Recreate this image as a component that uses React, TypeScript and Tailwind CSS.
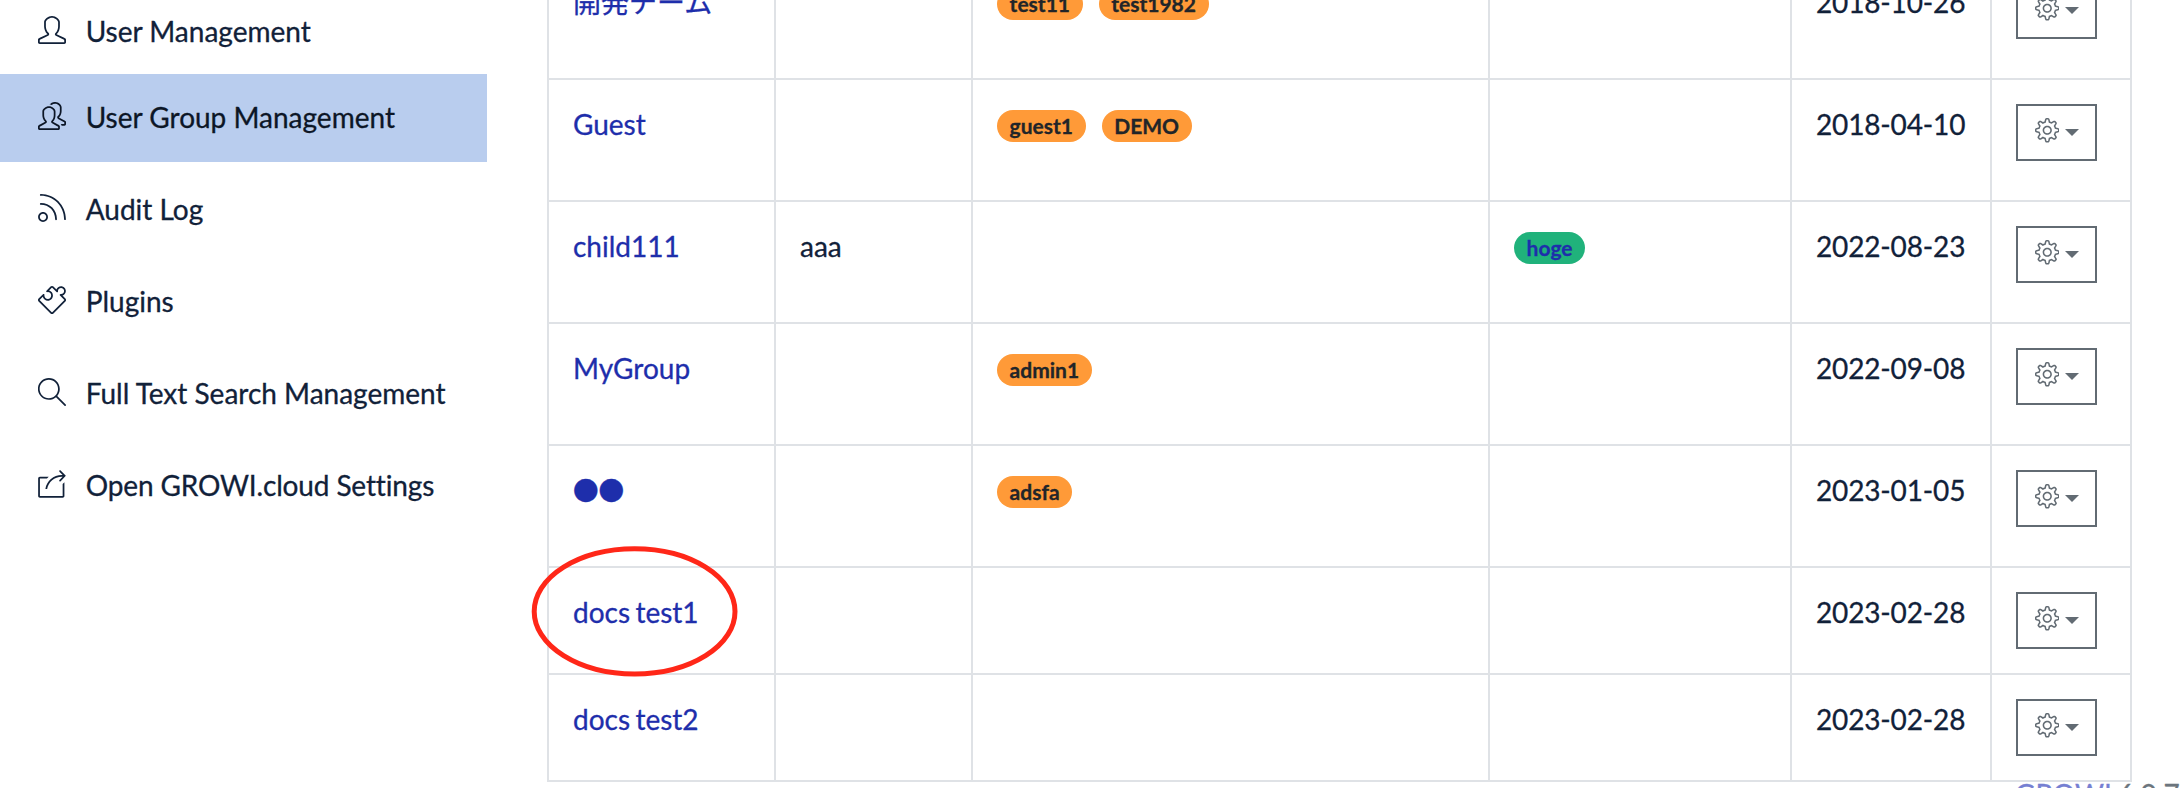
import type { IconType } from 'react-icons';
import { SlFeed, SlMagnifier, SlPeople, SlPuzzle, SlSettings, SlShareAlt, SlUser } from 'react-icons/sl';

type MenuItem = { label: string; icon: IconType; active?: boolean; tight?: boolean };

type Group = {
  name: string;
  description?: string;
  users?: string[];
  children?: string[];
  created: string;
  compact?: boolean;
  circled?: boolean;
};

const menu: MenuItem[] = [
  { label: 'User Management', icon: SlUser },
  { label: 'User Group Management', icon: SlPeople, active: true },
  { label: 'Audit Log', icon: SlFeed },
  { label: 'Plugins', icon: SlPuzzle },
  { label: 'Full Text Search Management', icon: SlMagnifier },
  { label: 'Open GROWI.cloud Settings', icon: SlShareAlt, tight: true },
];

const groups: Group[] = [
  { name: '開発チーム', users: ['test11', 'test1982'], created: '2018-10-26' },
  { name: 'Guest', users: ['guest1', 'DEMO'], created: '2018-04-10' },
  { name: 'child111', description: 'aaa', children: ['hoge'], created: '2022-08-23' },
  { name: 'MyGroup', users: ['admin1'], created: '2022-09-08' },
  { name: '●●', users: ['adsfa'], created: '2023-01-05' },
  { name: 'docs test1', created: '2023-02-28', compact: true, circled: true },
  { name: 'docs test2', created: '2023-02-28', compact: true },
];

function Sidebar() {
  return (
    <nav className="flex w-[487px] shrink-0 flex-col">
      {menu.map(({ label, icon: Icon, active, tight }, i) => (
        <a
          key={label}
          className={`flex h-[88px] shrink-0 items-center pl-[38px] ${
            active ? 'mb-1 bg-[#b9cdee] text-[#0c1626]' : 'text-[#112139]'
          } ${i === 0 ? '-mt-3 mb-[-2px]' : ''} ${i > 1 ? 'mb-1' : ''}`}
        >
          <Icon className="mt-[-4px] size-7" />
          <span className={`mb-[3px] ml-[19.7px] whitespace-nowrap ${tight ? 'tracking-[-0.14px]' : ''}`}>
            {label}
          </span>
        </a>
      ))}
    </nav>
  );
}

const cell = 'border-r-2 border-b-2 border-[#dfe2e6] px-6';
const textCell = `${cell} pt-[22.5px] whitespace-nowrap`;

function Badge({ label, className }: { label: string; className: string }) {
  return (
    <span
      className={`mt-1.5 h-8 rounded-full px-[12.6px] text-[21px] leading-8 font-bold ${className} ${
        label.endsWith('11') ? '[font-kerning:none]' : ''
      }`}
    >
      {label}
    </span>
  );
}

function Row({ group }: { group: Group }) {
  return (
    <div
      className={`grid grid-cols-[227px_197px_517px_302px_200px_140px] ${group.compact ? 'h-[107px]' : 'h-[122px]'}`}
    >
      <div className={`${textCell} relative text-[#1e2eab] [word-spacing:-1.8px]`}>
        {group.name === '●●' ? (
          <span className="align-[1.5px] font-['Noto_Sans_CJK_JP'] text-[25.6px] leading-none">{group.name}</span>
        ) : (
          <span className={group.name.endsWith('11') ? '[font-kerning:none]' : ''}>{group.name}</span>
        )}
        {group.circled && (
          <svg className="absolute top-[-23px] left-[-18px] h-[132px] w-[208px]" viewBox="0 0 208 132" fill="none">
            <ellipse cx="103.6" cy="66.4" rx="100.4" ry="62.6" stroke="#ff2718" strokeWidth="5" />
          </svg>
        )}
      </div>
      <div className={textCell}>{group.description}</div>
      <div className={`${cell} flex items-start gap-4 pt-6`}>
        {group.users?.map((user) => (
          <Badge key={user} label={user} className="bg-[#ff9a38] text-[#212529]" />
        ))}
      </div>
      <div className={`${cell} flex items-start gap-4 pt-6`}>
        {group.children?.map((child) => (
          <Badge key={child} label={child} className="bg-[#20b27b] text-[#1e2eab]" />
        ))}
      </div>
      <div className={`${textCell} tracking-[-0.15px]`}>{group.created}</div>
      <div className={`${cell} pt-6`}>
        <button className="flex h-[57px] w-[81px] items-start gap-1.5 border-2 border-[#626b73] pt-3 pl-[16.5px] text-[#626b73]">
          <SlSettings className="size-[24.5px]" />
          <svg className="mt-[11px] h-[7px] w-[14px]" viewBox="0 0 14 7" fill="currentColor">
            <path d="M0 0h14L7 7z" />
          </svg>
        </button>
      </div>
    </div>
  );
}

export default function App() {
  return (
    <div className="relative flex h-[788px] w-[2180px] overflow-hidden bg-white font-[Lato,'Noto_Sans_CJK_JP',sans-serif] text-[28px] leading-[42px] text-[#112139] [font-variant-ligatures:none] [-webkit-text-stroke:0.3px]">
      <Sidebar />
      <main className="ml-[60px] flex flex-col">
        <div className="-mt-[42px] w-[1585px] shrink-0 border-l-2 border-[#dfe2e6]">
          {groups.map((group) => (
            <Row key={group.name} group={group} />
          ))}
        </div>
        <footer className="-mt-[9px] flex w-[1633px] shrink-0 gap-1.5 pl-[1468px] whitespace-nowrap text-[#6c757d]">
          <span className="text-[#7680d2]">GROWI</span>
          <span>6.0.7</span>
        </footer>
      </main>
    </div>
  );
}
